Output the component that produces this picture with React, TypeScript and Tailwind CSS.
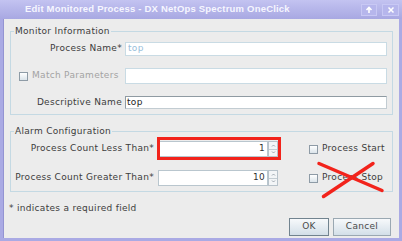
import React from "react";

function Checkbox() {
  return (
    <span className="inline-block w-[9px] h-[9px] border border-[#8e9ba6] bg-gradient-to-b from-white to-[#dbe4ea]" />
  );
}

function Spinner() {
  return (
    <div className="flex flex-col w-[10px] h-full border border-[#b7c2ca] bg-[#f3f5f7]">
      <div className="flex-1 flex items-center justify-center border-b border-[#c3ccd2]">
        <svg width="5" height="3" viewBox="0 0 5 3">
          <path d="M1 2.5 L2.5 1 L4 2.5" fill="none" stroke="#8a96a0" strokeWidth="0.8" />
        </svg>
      </div>
      <div className="flex-1 flex items-center justify-center">
        <svg width="5" height="3" viewBox="0 0 5 3">
          <path d="M1 0.5 L2.5 2 L4 0.5" fill="none" stroke="#8a96a0" strokeWidth="0.8" />
        </svg>
      </div>
    </div>
  );
}

function NumberField({ value, highlight }: { value: string; highlight?: boolean }) {
  return (
    <div className="relative flex w-[120px] h-[16px]">
      <div className="flex-1 flex items-center justify-end pr-[2px] bg-white border border-[#b9c6ce] text-[#333]">
        {value}
      </div>
      <Spinner />
      {highlight && (
        <div className="absolute -left-[1px] -top-[4px] w-[124px] h-[23px] border-[3px] border-[#f2231b]" />
      )}
    </div>
  );
}

export default function App() {
  return (
    <div className="relative w-[402px] h-[241px] flex flex-col bg-[#aaaae4] text-[9px] tracking-[0.3px] text-[#3c3c3c] font-['DejaVu_Sans',sans-serif] overflow-hidden">
      {/* Title bar */}
      <div className="h-[19px] flex items-center pl-[25px] pr-[3px] bg-gradient-to-b from-[#c3c3f1] to-[#a8a8e2]">
        <span className="text-[9.5px] font-bold tracking-[0.2px] text-[#f6f6ff] font-['Liberation_Sans',sans-serif]">
          Edit Monitored Process - DX NetOps Spectrum OneClick
        </span>
        <div className="ml-auto flex gap-[5px]">
          <div className="w-[16px] h-[12px] flex items-center justify-center border border-[#c8c8f4] bg-[#b6b6ec]">
            <svg width="8" height="8" viewBox="0 0 8 8">
              <path d="M4 7 V2 M1.5 4 L4 1.5 L6.5 4" fill="none" stroke="#ffffff" strokeWidth="1.6" />
            </svg>
          </div>
          <div className="w-[17px] h-[12px] flex items-center justify-center border border-[#c8c8f4] bg-[#b6b6ec]">
            <svg width="8" height="8" viewBox="0 0 8 8">
              <path d="M1.5 1.5 L6.5 6.5 M6.5 1.5 L1.5 6.5" fill="none" stroke="#ffffff" strokeWidth="1.5" />
            </svg>
          </div>
        </div>
      </div>

      {/* Body */}
      <div className="relative flex-1 mx-[3px] mb-[3px] px-[6px] pt-[12px] bg-[#ececec] border-l border-[#9494d2]">
        {/* Monitor Information */}
        <div className="relative h-[84px] border border-[#c4d9e3] pt-[10px]">
          <span className="absolute left-[3px] -top-[6px] px-[1px] leading-[11px] bg-[#ececec]">
            Monitor Information
          </span>
          <div className="flex items-center h-[14px]">
            <span className="w-[111px] text-right">Process Name*</span>
            <div className="ml-[3px] w-[262px] h-full flex items-center pl-[2px] bg-white border border-[#c9dbe4] text-[#98bedb]">
              top
            </div>
          </div>
          <div className="flex items-center h-[16px] mt-[12px]">
            <div className="w-[111px] flex items-center gap-[4px] pl-[8px] text-[#a3a3a3]">
              <Checkbox />
              <span>Match Parameters</span>
            </div>
            <div className="ml-[3px] w-[262px] h-full bg-white border border-[#c9dbe4]" />
          </div>
          <div className="flex items-center h-[13px] mt-[12px]">
            <span className="w-[111px] text-right">Descriptive Name</span>
            <div className="ml-[3px] w-[262px] h-full flex items-center pl-[1px] bg-white border border-[#c2ccd2] border-t-[#8f9aa2] border-l-[#8f9aa2] text-[#222]">
              top
            </div>
          </div>
        </div>

        {/* Alarm Configuration */}
        <div className="relative h-[61px] mt-[16px] border border-[#c4d9e3] pt-[9px]">
          <span className="absolute left-[3px] -top-[6px] px-[1px] leading-[11px] bg-[#ececec]">
            Alarm Configuration
          </span>
          <div className="flex items-center h-[16px]">
            <span className="w-[143px] text-right">Process Count Less Than*</span>
            <div className="ml-[4px]">
              <NumberField value="1" highlight />
            </div>
            <div className="ml-[31px] flex items-center gap-[4px]">
              <Checkbox />
              <span>Process Start</span>
            </div>
          </div>
          <div className="flex items-center h-[16px] mt-[13px]">
            <span className="w-[143px] text-right">Process Count Greater Than*</span>
            <div className="ml-[4px]">
              <NumberField value="10" />
            </div>
            <div className="ml-[31px] flex items-center gap-[4px]">
              <Checkbox />
              <span>Process Stop</span>
            </div>
          </div>
        </div>

        <p className="mt-[11px] -ml-[1px] leading-[11px]">* indicates a required field</p>

        <div className="flex justify-end gap-[4px] mr-[2px] mt-[4px]">
          <button className="w-[40px] h-[18px] border border-[#71838f] bg-gradient-to-b from-[#f7f9fb] to-[#d3dfe8] text-[#4a4a4a]">
            OK
          </button>
          <button className="w-[58px] h-[18px] border border-[#9aa8b2] bg-gradient-to-b from-[#f7f9fb] to-[#d3dfe8] text-[#4a4a4a]">
            Cancel
          </button>
        </div>
      </div>

      {/* red X annotation */}
      <svg className="absolute left-0 top-0 pointer-events-none" width="402" height="241" viewBox="0 0 402 241">
        <path d="M319 163.5 L382 190.5 M323.5 196.5 L373 163.5" stroke="#f2231b" strokeWidth="3.5" strokeLinecap="round" />
      </svg>
    </div>
  );
}
